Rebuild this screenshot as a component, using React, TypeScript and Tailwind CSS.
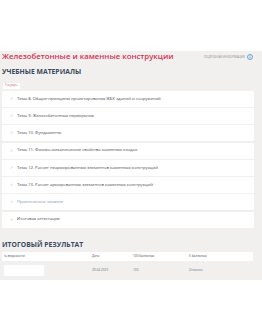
import React from "react";

const topics = [
  { title: "Тема 8. Общие принципы проектирования ЖБК зданий и сооружений" },
  { title: "Тема 9. Железобетонные перекрытия" },
  { title: "Тема 10. Фундаменты" },
  { title: "Тема 11. Физико-механические свойства каменных кладок" },
  { title: "Тема 12. Расчет неармированных элементов каменных конструкций" },
  { title: "Тема 13. Расчет армированных элементов каменных конструкций" },
  { title: "Практическое занятие", muted: true },
  { title: "Итоговая аттестация", final: true },
];

function InfoIcon() {
  return (
    <svg width="6" height="6" viewBox="0 0 12 12" fill="none">
      <circle cx="6" cy="6" r="5" stroke="#3b82c4" strokeWidth="1.4" />
      <rect x="5.3" y="5" width="1.4" height="4" fill="#3b82c4" />
      <circle cx="6" cy="3.4" r="0.8" fill="#3b82c4" />
    </svg>
  );
}

export default function App() {
  return (
    <div className="w-[262px] h-[334px] bg-white font-['Open_Sans',sans-serif] leading-none">
      <div className="h-[51px]" />
      <div className="bg-[#f1f0ef] pl-[2px] pr-[8px] pb-[1px]">
        {/* header */}
        <div className="flex items-center justify-between h-[12px]">
          <h1 className="text-[7.8px] font-semibold text-[#d2334f] leading-none">
            Железобетонные и каменные конструкции
          </h1>
          <div className="flex items-center gap-[2px] pr-[1px]">
            <span className="text-[3px] uppercase text-[#8a8f99] leading-none">
              подробная информация
            </span>
            <InfoIcon />
          </div>
        </div>

        <h2 className="mt-[6px] text-[6.8px] font-bold uppercase text-[#3c4a5e] leading-none">
          Учебные материалы
        </h2>

        <div className="mt-[7px] ml-[1px] flex w-fit items-center h-[6px] px-[2px] bg-white">
          <span className="text-[3px] text-[#c7587a] leading-none">Текущие</span>
        </div>

        <div className="mt-[2px] flex flex-col gap-[1.25px]">
          {topics.map((t) => (
            <div
              key={t.title}
              className="h-[16px] bg-white flex items-center pl-[8px] rounded-[1px]"
            >
              <span
                className={
                  t.final
                    ? "text-[4px] text-[#9dbd2c] leading-none"
                    : "text-[4px] text-[#a9b2bb] leading-none"
                }
              >
                ✓
              </span>
              <span
                className={
                  t.muted
                    ? "ml-[4px] text-[4.2px] text-[#7c93a8] leading-none"
                    : "ml-[4px] text-[4.2px] text-[#3f4650] leading-none"
                }
              >
                {t.title}
              </span>
            </div>
          ))}
        </div>

        <h2 className="mt-[14px] text-[6.8px] font-bold uppercase text-[#3c4a5e] leading-none">
          Итоговый результат
        </h2>

        <div className="mt-[4px] mr-[1px]">
          <div className="grid grid-cols-[88px_41px_56px_1fr] items-center h-[9px] bg-white pl-[2px] text-[3.2px] text-[#4a4f57] leading-none">
            <span>№ ведомости</span>
            <span>Дата</span>
            <span>100 балльная</span>
            <span>5 балльная</span>
          </div>
          <div className="grid grid-cols-[88px_41px_56px_1fr] items-center h-[18px] pl-[2px] text-[3.2px] text-[#6b7079] leading-none">
            <span className="block w-[40px] h-[11px] bg-white rounded-[1px]" />
            <span>29.04.2025</span>
            <span>100</span>
            <span>Отлично</span>
          </div>
        </div>
      </div>
    </div>
  );
}
